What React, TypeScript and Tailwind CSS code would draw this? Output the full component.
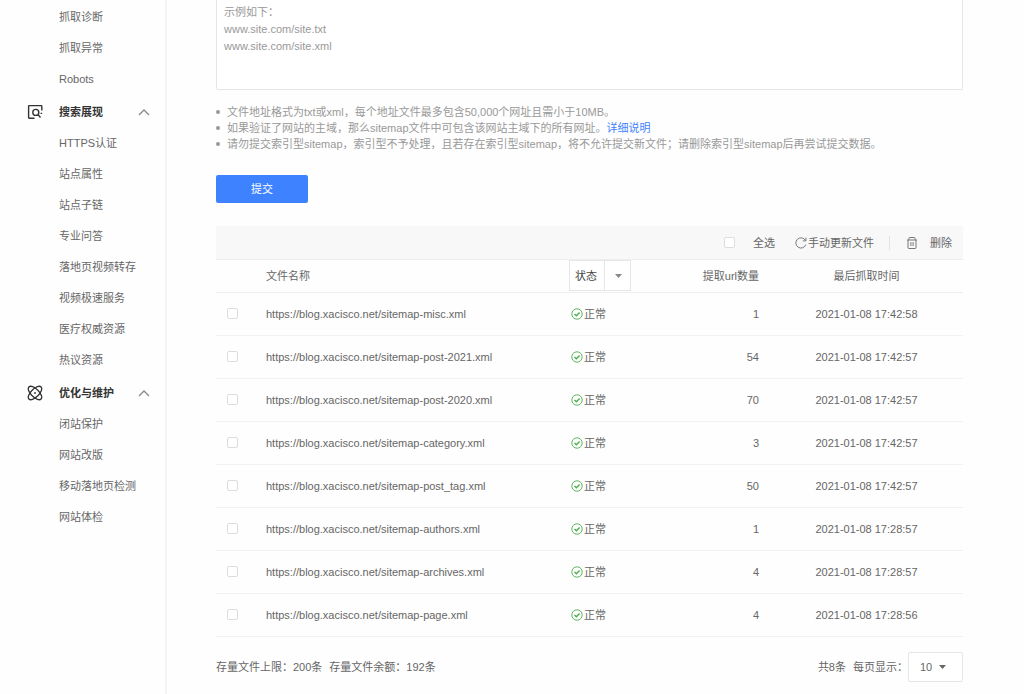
import { useState } from "react"
import type { ReactNode } from "react"

interface MenuGroup {
  id: string
  title?: string
  icon?: ReactNode
  items: string[]
}

interface SitemapFile {
  url: string
  count: number
  time: string
}

function SearchDisplayIcon() {
  return (
    <svg className="h-4 w-4" viewBox="0 0 16 16" fill="none" stroke="#333" strokeWidth="1.4">
      <path d="M7.5 14.2H2.2a.6.6 0 0 1-.6-.6V2.2a.6.6 0 0 1 .6-.6h12a.6.6 0 0 1 .6.6v4.4" />
      <circle cx="8.8" cy="8.4" r="3" />
      <path d="M10.9 10.6l2.6 2.8M13.6 9.4h1.5" />
    </svg>
  )
}

function OptimizeIcon() {
  return (
    <svg className="h-4 w-4" viewBox="0 0 16 16" fill="none" stroke="#333" strokeWidth="1.3">
      <ellipse cx="8" cy="8" rx="8.6" ry="4" transform="rotate(45 8 8)" />
      <ellipse cx="8" cy="8" rx="8.6" ry="4" transform="rotate(-45 8 8)" />
      <circle cx="8" cy="8" r="0.9" fill="#333" stroke="none" />
    </svg>
  )
}

function RefreshIcon() {
  return (
    <svg className="h-3 w-3" viewBox="0 0 12 12" fill="none" stroke="#777" strokeWidth="1">
      <path d="M10.8 7.6A5.1 5.1 0 1 1 10.4 3.4" />
      <path d="M10.9 0.6v3.3H7.8" />
    </svg>
  )
}

function TrashIcon() {
  return (
    <svg className="h-3 w-3" viewBox="0 0 12 12" fill="none" stroke="#777" strokeWidth="1">
      <path d="M1 3h10M3 2.8V1.3A.8.8 0 0 1 3.8.5h4.4a.8.8 0 0 1 .8.8v1.5M2 3v7.5a1 1 0 0 0 1 1h6a1 1 0 0 0 1-1V3" />
      <path d="M4.9 5v4M7.1 5v4" />
    </svg>
  )
}

function OkIcon() {
  return (
    <svg className="h-3 w-3" viewBox="0 0 12 12" fill="none" stroke="#4db04f">
      <circle cx="6" cy="6" r="5.2" strokeWidth="0.9" />
      <path d="M3.5 6l1.9 1.8 3.2-3.3" strokeWidth="1.4" />
    </svg>
  )
}

function Caret({ className }: { className: string }) {
  return (
    <svg className={className} width="7" height="4" viewBox="0 0 7 4">
      <path d="M0 0h7L3.5 4z" fill="currentColor" />
    </svg>
  )
}

const MENU: MenuGroup[] = [
  { id: "crawl", items: ["抓取诊断", "抓取异常", "Robots"] },
  {
    id: "display",
    title: "搜索展现",
    icon: <SearchDisplayIcon />,
    items: [
      "HTTPS认证",
      "站点属性",
      "站点子链",
      "专业问答",
      "落地页视频转存",
      "视频极速服务",
      "医疗权威资源",
      "热议资源",
    ],
  },
  {
    id: "optimize",
    title: "优化与维护",
    icon: <OptimizeIcon />,
    items: ["闭站保护", "网站改版", "移动落地页检测", "网站体检"],
  },
]

const FILES: SitemapFile[] = [
  { url: "https://blog.xacisco.net/sitemap-misc.xml", count: 1, time: "2021-01-08 17:42:58" },
  { url: "https://blog.xacisco.net/sitemap-post-2021.xml", count: 54, time: "2021-01-08 17:42:57" },
  { url: "https://blog.xacisco.net/sitemap-post-2020.xml", count: 70, time: "2021-01-08 17:42:57" },
  { url: "https://blog.xacisco.net/sitemap-category.xml", count: 3, time: "2021-01-08 17:42:57" },
  { url: "https://blog.xacisco.net/sitemap-post_tag.xml", count: 50, time: "2021-01-08 17:42:57" },
  { url: "https://blog.xacisco.net/sitemap-authors.xml", count: 1, time: "2021-01-08 17:28:57" },
  { url: "https://blog.xacisco.net/sitemap-archives.xml", count: 4, time: "2021-01-08 17:28:57" },
  { url: "https://blog.xacisco.net/sitemap-page.xml", count: 4, time: "2021-01-08 17:28:56" },
]

const CHECKBOX =
  "block h-[11px] w-[11px] appearance-none rounded-xs border border-[#ddd] bg-white checked:border-[#3e82ff] checked:bg-[#3e82ff]"

function Sidebar() {
  const [closed, setClosed] = useState<string[]>([])

  const toggle = (id: string) => {
    setClosed(prev => (prev.includes(id) ? prev.filter(c => c !== id) : [...prev, id]))
  }

  return (
    <nav className="w-[167px] shrink-0 border-r-2 border-[#f4f4f4] pt-px">
      {MENU.map(group => (
        <div key={group.id}>
          {group.title && (
            <button
              onClick={() => toggle(group.id)}
              className="flex h-[33px] w-full items-center pt-0.5 pr-[15px] pl-[27px] font-bold text-[#333]"
            >
              {group.icon}
              <span className="ml-4">{group.title}</span>
              <svg className="ml-auto h-2 w-3" viewBox="0 0 12 8" fill="none" stroke="#888" strokeWidth="1.3">
                <path d="M1 7l5-5 5 5" />
              </svg>
            </button>
          )}
          {!closed.includes(group.id) && (
            <ul>
              {group.items.map(item => (
                <li key={item} className="flex h-[31px] items-center pl-[59px]">
                  <a href="#">{item}</a>
                </li>
              ))}
            </ul>
          )}
        </div>
      ))}
    </nav>
  )
}

export default function App() {
  const [selected, setSelected] = useState<string[]>([])
  const allSelected = selected.length === FILES.length

  const toggleFile = (url: string) => {
    setSelected(prev => (prev.includes(url) ? prev.filter(u => u !== url) : [...prev, url]))
  }

  return (
    <div className="flex min-h-screen bg-[#fefefe] font-['Liberation_Sans','Noto_Sans_CJK_SC',sans-serif] text-[11px] leading-4 text-[#666]">
      <Sidebar />

      <main className="min-w-0 flex-1 pr-[61px] pl-[49px]">
        {/* Submit form */}
        <textarea
          aria-label="sitemap"
          placeholder={"示例如下：\nwww.site.com/site.txt\nwww.site.com/site.xml"}
          className="block h-[90px] w-full resize-none rounded-b-xs border border-t-0 border-[#e6e6e6] bg-white px-[7px] pt-1 leading-[17px] outline-none placeholder:text-[#999]"
        />
        <ul className="mt-[14px] text-[#999]">
          <li className="flex items-center gap-[7px]">
            <span className="h-1 w-1 rounded-full bg-[#999]" />
            <span>文件地址格式为txt或xml，每个地址文件最多包含50,000个网址且需小于10MB。</span>
          </li>
          <li className="flex items-center gap-[7px]">
            <span className="h-1 w-1 rounded-full bg-[#999]" />
            <span>
              如果验证了网站的主域，那么sitemap文件中可包含该网站主域下的所有网址。
              <a href="#" className="text-[#3e82ff]">详细说明</a>
            </span>
          </li>
          <li className="flex items-center gap-[7px]">
            <span className="h-1 w-1 rounded-full bg-[#999]" />
            <span>请勿提交索引型sitemap，索引型不予处理，且若存在索引型sitemap，将不允许提交新文件；请删除索引型sitemap后再尝试提交数据。</span>
          </li>
        </ul>
        <button className="mt-[23px] block h-7 w-[92px] rounded-xs bg-[#3e82ff] text-white">提交</button>

        {/* Toolbar */}
        <div className="mt-[23px] flex h-[34px] items-center justify-end border-b border-[#eee] bg-[#f8f8f8] pr-[11px]">
          <label className="flex items-center gap-[18px]">
            <input
              type="checkbox"
              className={CHECKBOX}
              checked={allSelected}
              onChange={() => setSelected(allSelected ? [] : FILES.map(f => f.url))}
            />
            全选
          </label>
          <button className="ml-5 flex items-center gap-px">
            <RefreshIcon />
            手动更新文件
          </button>
          <span className="mr-4 ml-[15px] h-[14px] w-px bg-[#e2e2e2]" />
          <button className="flex items-center gap-3">
            <TrashIcon />
            删除
          </button>
        </div>

        {/* File list */}
        <table className="w-full table-fixed border-collapse">
          <thead>
            <tr className="h-8 border-b border-[#eee]">
              <th className="w-[50px]" />
              <th className="text-left font-normal">文件名称</th>
              <th className="w-[100px] p-0 text-left font-normal">
                <div className="relative w-[62px]">
                  <select
                    aria-label="状态"
                    className="block h-[31px] w-full appearance-none border border-[#e6e6e6] bg-white pl-[5px] text-[#444] outline-none"
                  >
                    <option>状态</option>
                  </select>
                  <span className="pointer-events-none absolute inset-y-0 right-0 flex w-[27px] items-center justify-center border-l border-[#e6e6e6] text-[#888]">
                    <Caret className="block" />
                  </span>
                </div>
              </th>
              <th className="w-[101px] pr-[11px] text-right font-normal">提取url数量</th>
              <th className="w-[193px] text-center font-normal">最后抓取时间</th>
            </tr>
          </thead>
          <tbody>
            {FILES.map(file => (
              <tr key={file.url} className="h-[43px] border-b border-[#f2f2f2]">
                <td className="pl-[11px]">
                  <input
                    type="checkbox"
                    aria-label={file.url}
                    className={CHECKBOX}
                    checked={selected.includes(file.url)}
                    onChange={() => toggleFile(file.url)}
                  />
                </td>
                <td className="truncate">{file.url}</td>
                <td>
                  <span className="flex items-center gap-px pl-0.5">
                    <OkIcon />
                    正常
                  </span>
                </td>
                <td className="pr-[11px] text-right">{file.count}</td>
                <td className="text-center">{file.time}</td>
              </tr>
            ))}
          </tbody>
        </table>

        {/* Footer */}
        <div className="flex items-center justify-between pt-[15px]">
          <div className="flex gap-[7px]">
            <span>存量文件上限：200条</span>
            <span>存量文件余额：192条</span>
          </div>
          <div className="flex items-center gap-[7px]">
            <span>共8条</span>
            <label className="flex items-center">
              每页显示：
              <span className="relative">
                <select className="block h-[30px] w-[55px] appearance-none rounded-xs border border-[#e6e6e6] bg-white pl-[11px] outline-none">
                  <option>10</option>
                  <option>20</option>
                  <option>50</option>
                </select>
                <Caret className="pointer-events-none absolute top-[13px] right-[17px]" />
              </span>
            </label>
          </div>
        </div>
      </main>
    </div>
  )
}
